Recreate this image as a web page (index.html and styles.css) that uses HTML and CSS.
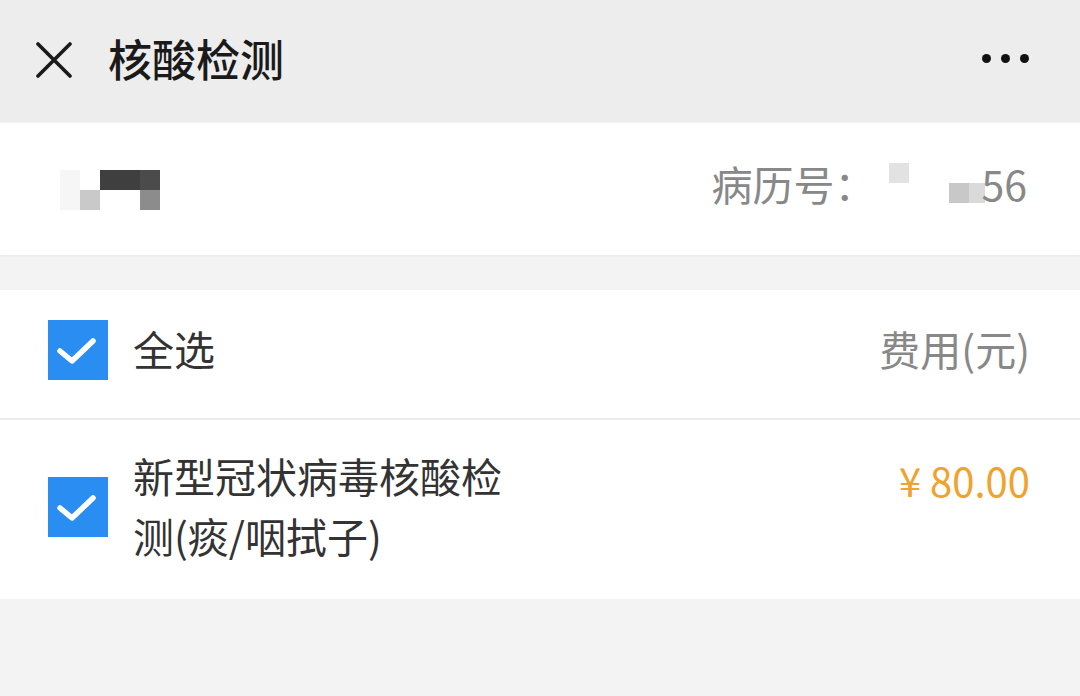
FILE: index.html
```html
<!DOCTYPE html>
<html lang="zh-CN">
  <head>
    <meta charset="UTF-8" />
    <meta name="viewport" content="width=device-width, initial-scale=1.0" />
    <title>核酸检测</title>
    <link rel="stylesheet" href="styles.css">
  </head>
  <body>
    <div class="topbar">
      <svg class="close" width="36" height="36" viewBox="0 0 36 36">
        <path d="M2 2 L34 34 M34 2 L2 34" stroke="#1a1a1a" stroke-width="3.6" stroke-linecap="round" />
      </svg>
      <div class="title">核酸检测</div>
      <div class="more"><span></span><span></span><span></span></div>
    </div>

    <div class="patient">
      <div class="mosaic">
        <i class="c1"></i><i></i><i class="c3"></i><i class="c3"></i><i class="c4"></i>
        <i class="c1"></i><i class="c2"></i><i></i><i></i><i class="c5"></i>
      </div>
      <div class="record">
        病历号：<span class="blur b1"></span><span class="tail"><span class="blur b2"></span>56</span>
      </div>
    </div>

    <div class="list">
      <div class="row head">
        <span class="check"></span>
        <span class="label">全选</span>
        <span class="fee-title">费用(元)</span>
      </div>
      <div class="row item">
        <span class="check"></span>
        <span class="label">新型冠状病毒核酸检测(痰/咽拭子)</span>
        <span class="price">¥ 80.00</span>
      </div>
    </div>
  </body>
</html>
```

FILE: styles.css
```css
body {
  margin: 0;
  background: #f3f3f3;
  font-family: "Noto Sans CJK SC", "Noto Sans", sans-serif;
  color: #333;
}
.topbar {
  height: 122px;
  box-sizing: border-box;
  background: #ededed;
  display: flex;
  align-items: center;
  padding: 0 51px 6px 36px;
}
.close {
  flex: none;
  margin-top: 4px;
}
.title {
  margin-left: 36px;
  font-size: 44px;
  font-weight: 500;
  color: #1a1a1a;
  flex: 1;
}
.more {
  display: flex;
  gap: 10px;
}
.more span {
  width: 9px;
  height: 9px;
  border-radius: 50%;
  background: #111;
}
.patient {
  margin-top: 1px;
  height: 132px;
  box-sizing: border-box;
  background: #fff;
  display: flex;
  align-items: center;
  justify-content: space-between;
  padding: 0 53px 12px 60px;
  box-shadow: 0 1px 2px rgba(0, 0, 0, 0.05);
}
.mosaic {
  display: grid;
  grid-template-columns: repeat(5, 20px);
  grid-template-rows: repeat(2, 20px);
  margin-top: 14px;
}
.mosaic .c1 { background: #f6f6f6; }
.mosaic .c2 { background: #c9c9c9; }
.mosaic .c3 { background: #3f3f3f; }
.mosaic .c4 { background: #4b4b4b; }
.mosaic .c5 { background: #8c8c8c; }
.record {
  font-size: 41px;
  color: #888;
  display: flex;
  align-items: center;
}
.blur {
  display: inline-block;
}
.b1 {
  width: 20px;
  height: 20px;
  background: #e2e2e2;
  margin: -20px 0 0 14px;
}
.tail {
  display: flex;
  align-items: center;
  margin-left: 40px;
}
.b2 {
  width: 36px;
  height: 20px;
  background: linear-gradient(90deg, #c8c8c8 55%, #dadada 55%);
  margin: 20px -4px 0 0;
}
.list {
  margin-top: 35px;
  background: #fff;
}
.row {
  display: flex;
  padding: 0 50px 0 48px;
}
.row.head {
  height: 130px;
  box-sizing: border-box;
  padding-bottom: 12px;
  align-items: center;
  border-bottom: 2px solid #ececec;
}
.head .check {
  margin-top: 4px;
}
.row.item {
  padding-top: 25px;
  padding-bottom: 34px;
  align-items: center;
}
.item .check {
  margin-top: 4px;
}
.check {
  flex: none;
  width: 60px;
  height: 60px;
  background: #2a8df2 url("data:image/svg+xml;utf8,<svg xmlns='http://www.w3.org/2000/svg' width='60' height='60'><path d='M12 31 L24 41 L45 21' fill='none' stroke='white' stroke-width='5.5' stroke-linecap='round' stroke-linejoin='round'/></svg>") no-repeat center;
}
.label {
  margin-left: 25px;
  font-size: 41px;
  color: #333;
  flex: 1;
}
.item .label {
  max-width: 385px;
  line-height: 60px;
  margin-right: auto;
}
.fee-title {
  font-size: 41px;
  color: #888;
}
.price {
  align-self: flex-start;
  margin-top: 5px;
  font-size: 40px;
  line-height: 60px;
  color: #f0a22e;
}
```
